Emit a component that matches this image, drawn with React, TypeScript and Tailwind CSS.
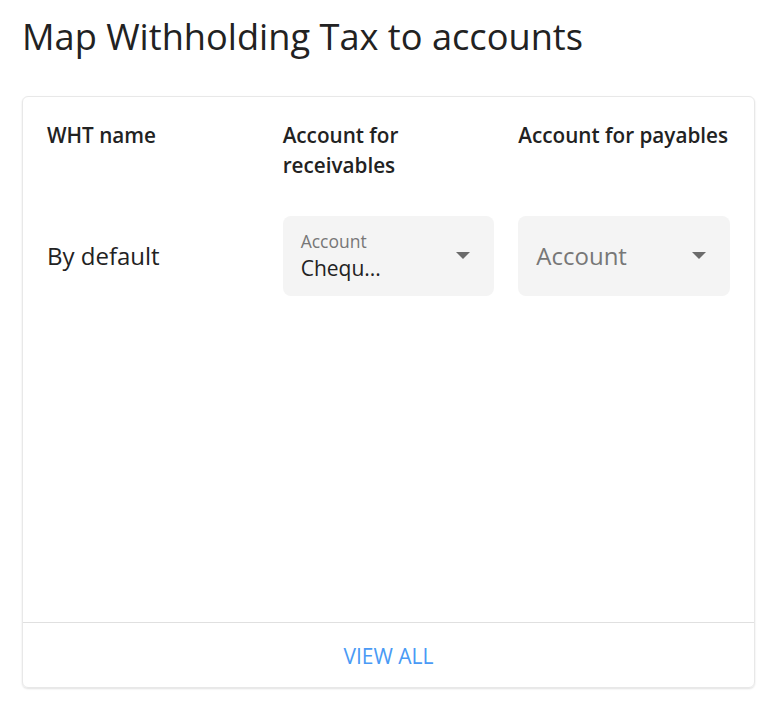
import React from 'react';

const Arrow: React.FC = () => (
  <svg width="14" height="8" viewBox="0 0 14 8" className="shrink-0">
    <path d="M0 0 L14 0 L7 7 Z" fill="#6b6b6b" />
  </svg>
);

const App: React.FC = () => {
  return (
    <div className="min-h-[714px] w-[779px] bg-white pl-[22px] pt-[12px] font-['Open_Sans',sans-serif] text-[#222]">
      <h1 className="text-[36.2px] leading-[48px] font-normal">Map Withholding Tax to accounts</h1>

      <div className="mt-[36px] w-[733px] h-[592px] flex flex-col rounded-[6px] border border-[#e8e8e8] shadow-[0_1px_2px_rgba(0,0,0,0.12)]">
        <div className="flex-1 px-[24px] pt-[23px]">
          <div className="grid grid-cols-3 gap-x-[24px] text-[20.7px] leading-[30px] font-semibold">
            <div>WHT name</div>
            <div>Account for<br />receivables</div>
            <div className="whitespace-nowrap">Account for payables</div>
          </div>

          <div className="mt-[36px] grid grid-cols-3 gap-x-[24px] items-center">
            <div className="text-[24px]">By default</div>

            <div className="h-[80px] rounded-[8px] bg-[#f4f4f4] pl-[18px] pr-[24px] flex items-center justify-between">
              <div className="flex flex-col">
                <span className="text-[17.5px] leading-[24px] text-[#777]">Account</span>
                <span className="text-[21px] leading-[30px] text-[#222]">Chequ...</span>
              </div>
              <Arrow />
            </div>

            <div className="h-[80px] rounded-[8px] bg-[#f4f4f4] pl-[18px] pr-[24px] flex items-center justify-between">
              <span className="text-[24px] text-[#777]">Account</span>
              <Arrow />
            </div>
          </div>
        </div>

        <div className="h-[65px] border-t border-[#e0e0e0] flex items-center justify-center pt-[4px]">
          <a href="#" className="text-[21px] text-[#4a9af5] uppercase">View all</a>
        </div>
      </div>
    </div>
  );
};

export default App;
